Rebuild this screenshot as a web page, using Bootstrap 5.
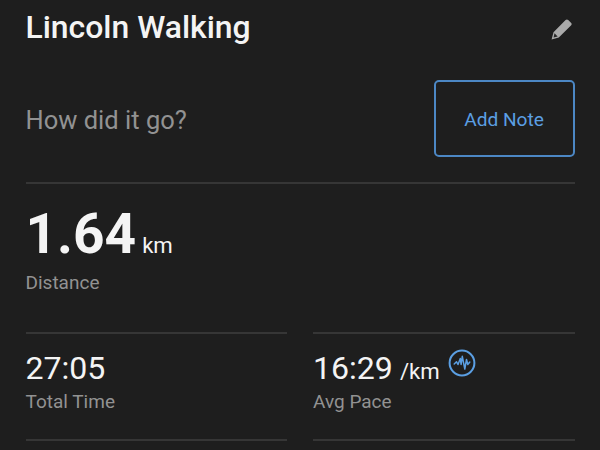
<!DOCTYPE html>
<html lang="en"><head><meta charset="utf-8"><title>Lincoln Walking</title>
<link rel="stylesheet" href="https://cdn.jsdelivr.net/npm/bootstrap@5.3.0/dist/css/bootstrap.min.css">
<style>
body{background:#1e1e1e;color:#f4f4f4;font-family:Roboto,sans-serif;height:450px;overflow:hidden}
.screen{width:600px;height:450px;padding:0 25.5px;line-height:1}
.top{height:58px;padding-top:11px}
.title{font-size:31.9px;font-weight:500;line-height:32px}
.pencil{margin:6px 1px 0 0}
.prompt-row{height:124px;padding-top:22px;padding-bottom:25px}
.prompt{font-size:25.5px;color:#929292;padding-top:4px}
.note-btn,.note-btn:hover{width:141px;height:77px;border:2px solid #4c87c4;border-radius:5px;color:#5b9fe3;font-size:19.1px;padding-top:4px}
.rule{border-top:2px solid #363636}
.dist{height:150px;padding-top:26px}
.big{font-size:55px;font-weight:700;line-height:48px}
.unit{font-size:22.2px}
.dist .unit{margin-left:6px}
.caption{font-size:19px;color:#929292;line-height:22px}
.dist .caption{margin-top:14px}
.num{font-size:32.1px;line-height:34px;height:40px}
.num .unit{margin-left:7px}
.pulse{margin:-2px 0 0 8px}
.metric{height:107px;padding-top:17px}
</style></head><body>
<main class="screen d-flex flex-column">
<header class="top d-flex justify-content-between align-items-start"><h1 class="title m-0">Lincoln Walking</h1>
<svg class="pencil" width="24" height="24" viewBox="0 0 24 24"><path d="M1.6 22.4 3.5 15.2 15.6 3.1Q16.9 1.8 18.2 3.1L21.2 6.1Q22.3 7.2 21.2 8.3L8.8 20.5Z" fill="#aaa"/><path d="M4.5 16.2 7.7 19.4 3.6 20.5Z" fill="#292929"/></svg></header>
<section class="prompt-row d-flex justify-content-between align-items-center"><span class="prompt">How did it go?</span><button class="note-btn btn px-0 pb-0">Add Note</button></section>
<section class="dist rule"><div class="d-flex align-items-baseline"><span class="big">1.64</span><span class="unit">km</span></div><div class="caption">Distance</div></section>
<section class="d-flex" style="gap:26px">
<div class="flex-fill w-50"><div class="metric rule"><div class="num d-flex align-items-baseline">27:05</div><div class="caption">Total Time</div></div><div class="rule"></div></div>
<div class="flex-fill w-50"><div class="metric rule"><div class="num d-flex align-items-baseline">16:29<span class="unit">/km</span><svg class="pulse align-self-start" width="28" height="28" viewBox="0 0 28 28" fill="none" stroke="#5b9fe3"><circle cx="14" cy="14" r="12.4" stroke-width="2"/><path d="M6.2 15 8.5 12.8 10 15.5 12.3 9.5 13.1 15.5 14.3 7.3 16.8 20 18.5 10.5 19.8 15.5 21.8 13" stroke-width="1.5" stroke-linejoin="round" stroke-linecap="round"/></svg></div><div class="caption">Avg Pace</div></div><div class="rule"></div></div>
</section>
</main>
<script src="https://cdn.jsdelivr.net/npm/bootstrap@5.3.0/dist/js/bootstrap.bundle.min.js"></script>
</body></html>
